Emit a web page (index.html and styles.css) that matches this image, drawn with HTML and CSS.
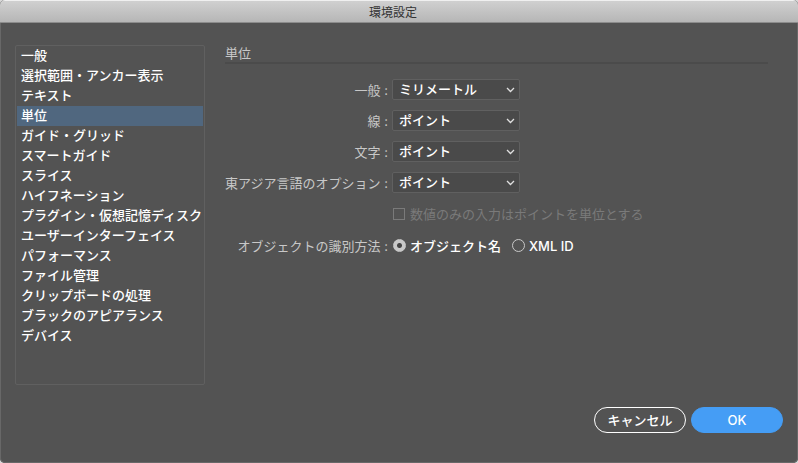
FILE: index.html
```html
<!DOCTYPE html>
<html lang="ja">
  <head>
    <meta charset="utf-8" />
    <meta name="viewport" content="width=device-width, initial-scale=1.0" />
    <title>環境設定</title>
    <link rel="stylesheet" href="styles.css">
  </head>
  <body>
    <div class="window">
      <header class="titlebar">環境設定</header>
      <form class="dialog">
        <div class="content">
          <nav class="sidebar">
            <a href="#general">一般</a>
            <a href="#selection">選択範囲・アンカー表示</a>
            <a href="#type">テキスト</a>
            <a href="#units" class="selected">単位</a>
            <a href="#guides">ガイド・グリッド</a>
            <a href="#smart-guides">スマートガイド</a>
            <a href="#slices">スライス</a>
            <a href="#hyphenation">ハイフネーション</a>
            <a href="#plugins">プラグイン・仮想記憶ディスク</a>
            <a href="#ui">ユーザーインターフェイス</a>
            <a href="#performance">パフォーマンス</a>
            <a href="#files">ファイル管理</a>
            <a href="#clipboard">クリップボードの処理</a>
            <a href="#black">ブラックのアピアランス</a>
            <a href="#devices">デバイス</a>
          </nav>
          <section class="panel" id="units">
            <h1 class="panel-title">単位</h1>
            <div class="fields">
              <label class="label" for="unit-general">一般 :</label>
              <div class="select">
                <select id="unit-general">
                  <option>ミリメートル</option>
                </select>
                <svg viewBox="0 0 9 6"><path d="M1 1l3.5 3.5L8 1" /></svg>
              </div>

              <label class="label" for="unit-stroke">線 :</label>
              <div class="select">
                <select id="unit-stroke">
                  <option>ポイント</option>
                </select>
                <svg viewBox="0 0 9 6"><path d="M1 1l3.5 3.5L8 1" /></svg>
              </div>

              <label class="label" for="unit-type">文字 :</label>
              <div class="select">
                <select id="unit-type">
                  <option>ポイント</option>
                </select>
                <svg viewBox="0 0 9 6"><path d="M1 1l3.5 3.5L8 1" /></svg>
              </div>

              <label class="label" for="unit-asian">東アジア言語のオプション :</label>
              <div class="select">
                <select id="unit-asian">
                  <option>ポイント</option>
                </select>
                <svg viewBox="0 0 9 6"><path d="M1 1l3.5 3.5L8 1" /></svg>
              </div>

              <div class="choices">
                <input type="checkbox" id="points-only" disabled />
                <label for="points-only">数値のみの入力はポイントを単位とする</label>
              </div>

              <span class="label" id="identify">オブジェクトの識別方法 :</span>
              <div class="choices" role="radiogroup" aria-labelledby="identify">
                <input type="radio" name="identify" id="by-name" checked />
                <label for="by-name">オブジェクト名</label>
                <input type="radio" name="identify" id="by-xml" />
                <label for="by-xml">XML ID</label>
              </div>
            </div>
          </section>
        </div>
        <footer class="actions">
          <button type="button" class="button">キャンセル</button>
          <button type="submit" class="button button-primary">OK</button>
        </footer>
      </form>
    </div>
  </body>
</html>
```

FILE: styles.css
```css
* {
  box-sizing: border-box;
}
body {
  margin: 0;
  background-color: #d8d8d8;
  color: white;
  font-family: Inter, "Noto Sans CJK JP", sans-serif;
  font-size: 13px;
  font-weight: 500;
  line-height: 20px;
}
.window {
  display: flex;
  flex-direction: column;
  min-height: 100vh;
  background-color: #535353;
  border-radius: 5px;
  overflow: hidden;
  box-shadow: inset 1px 0 #686868, inset -1px 0 #686868, inset 0 -1px #686868;
}
.titlebar {
  height: 23px;
  padding-right: 12px;
  border-top: 1px solid #f0f0f0;
  border-bottom: 1px solid #8c8c8c;
  background: linear-gradient(#d0d0d0, #b6b6b6);
  color: #333;
  font-size: 12px;
  font-weight: 400;
  line-height: 24px;
  text-align: center;
}
.dialog {
  display: flex;
  flex: 1;
  flex-direction: column;
  justify-content: space-between;
  gap: 22px;
  padding: 22px 15px 30px;
}
.content {
  display: flex;
  gap: 20px;
}

/* category list */
.sidebar {
  flex: 0 0 190px;
  min-height: 340px;
  padding: 0 1px;
  border: 1px solid #606060;
  border-radius: 2px;
}
.sidebar a {
  display: block;
  padding: 0 0 2px 4px;
  color: inherit;
  line-height: 18px;
  text-decoration: none;
  white-space: nowrap;
}
.sidebar .selected {
  background-color: #50677f;
}

/* settings */
.panel {
  flex: 1;
  padding-right: 15px;
}
.panel-title {
  margin: 0 0 15px;
  border-bottom: 2px solid #4b4b4b;
  color: #c8c8c8;
  font-size: 13px;
  font-weight: 400;
  line-height: 17px;
}
.fields {
  display: grid;
  grid-template-columns: max-content 1fr;
  grid-template-rows: repeat(4, 21px) 22px 21px;
  gap: 10px 4px;
  align-items: center;
}
.label {
  color: #c8c8c8;
  font-weight: 400;
  text-align: right;
}
.select {
  position: relative;
  width: 128px;
}
.select select {
  display: block;
  width: 100%;
  height: 21px;
  padding: 0 20px 0 6px;
  border: 1px solid #606060;
  border-radius: 2px;
  background-color: #4a4a4a;
  color: inherit;
  font: inherit;
  line-height: 19px;
  appearance: none;
}
.select svg {
  position: absolute;
  top: 8px;
  right: 5px;
  width: 9px;
  height: 6px;
  fill: none;
  stroke: #e0e0e0;
  stroke-width: 1.3;
  pointer-events: none;
}
.choices {
  display: flex;
  grid-column: 2;
  align-items: center;
}
.choices input {
  flex: none;
  margin: 0 5px 0 1px;
  width: 12px;
  height: 12px;
  border: 1px solid #c8c8c8;
  appearance: none;
}
.choices input[type="radio"] {
  margin: 0 4px 0 1px;
  width: 13px;
  height: 13px;
  border-radius: 50%;
}
.choices input:checked {
  background: radial-gradient(circle, #444 2px, #c8c8c8 3px);
}
.choices label + input[type="radio"] {
  margin-left: 11px;
}
.choices input:disabled {
  border-color: #7a7a7a;
}
.choices input:disabled + label {
  color: #7a7a7a;
  font-weight: 400;
}

.actions {
  display: flex;
  justify-content: flex-end;
  gap: 5px;
}
.button {
  width: 92px;
  height: 26px;
  padding: 0;
  border: 1px solid white;
  border-radius: 13px;
  background-color: transparent;
  color: white;
  font: inherit;
  cursor: pointer;
}
.button-primary {
  border-color: #459df5;
  background-color: #459df5;
}
```
